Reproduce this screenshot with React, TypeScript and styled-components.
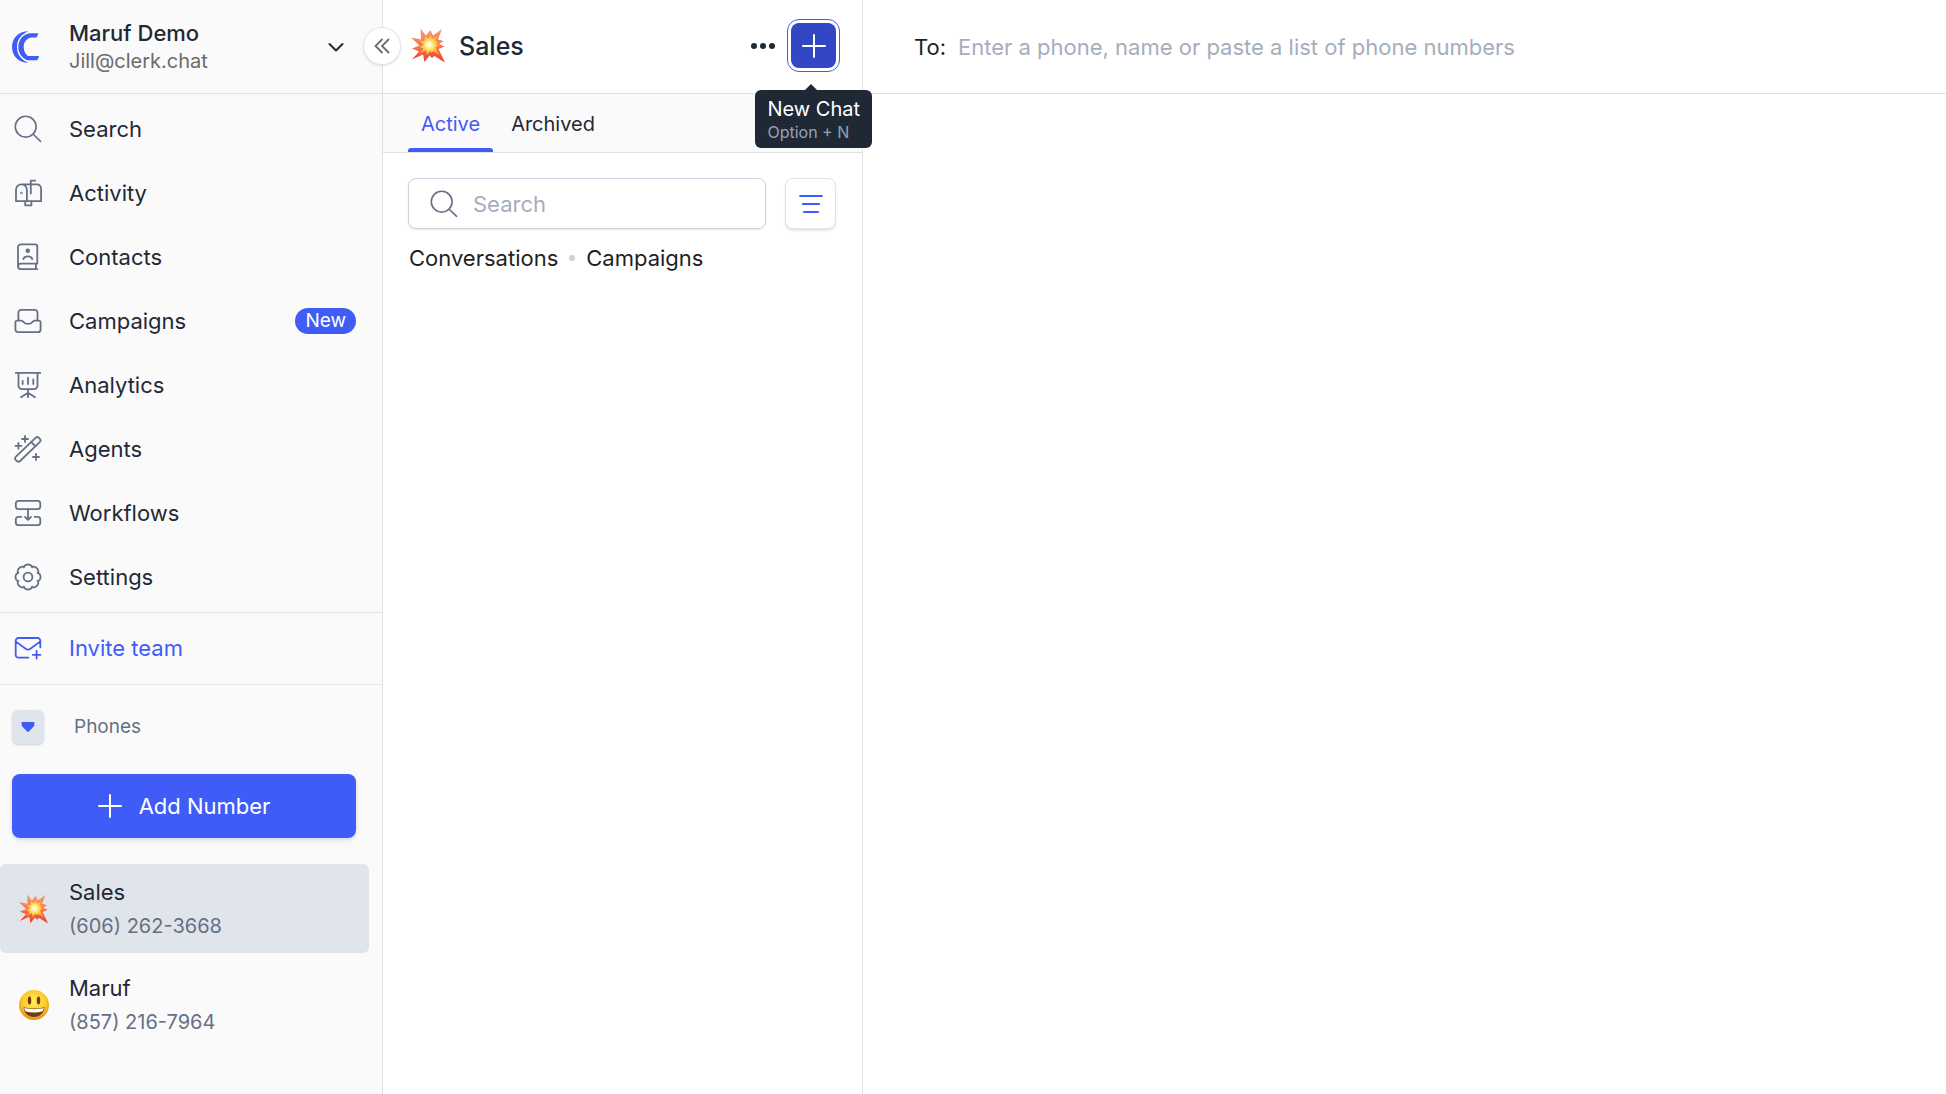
import React from "react";
import styled, { createGlobalStyle } from "styled-components";

const color = {
  ink: "#1f2937",
  muted: "#667085",
  faint: "#a6adbd",
  line: "#e0e1e4",
  panel: "#fafafa",
  blue: "#3f5cf7",
  blueDark: "#3347c5",
  selected: "#e0e4eb",
};

const GlobalStyle = createGlobalStyle`
  *, *::before, *::after { box-sizing: border-box; }
  body { margin: 0; font-family: Inter, "Liberation Sans", sans-serif; font-size: 22px; line-height: 28px; color: ${color.ink}; background: #fff; }
  button, input { font: inherit; color: inherit; }
  button { border: 0; padding: 0; background: none; cursor: pointer; }
  a { color: inherit; text-decoration: none; }
  svg { display: block; flex: none; }
  h1, ul { margin: 0; padding: 0; }
  ul { list-style: none; }
`;

const Page = styled.div`
  display: flex;
  min-height: 100vh;
`;

const Sidebar = styled.aside`
  flex: none;
  width: 383px;
  background: ${color.panel};
  border-right: 1px solid ${color.line};
`;

const AccountBar = styled.header`
  position: relative;
  display: flex;
  align-items: center;
  height: 94px;
  padding: 0 38px 0 12px;
  border-bottom: 1px solid ${color.line};
`;

const Account = styled.button`
  display: flex;
  flex: 1;
  align-items: center;
  gap: 29px;
  text-align: left;
`;

const AccountText = styled.span`
  display: flex;
  flex: 1;
  flex-direction: column;
`;

const AccountName = styled.span`
  font-weight: 500;
`;

const AccountMail = styled.span`
  font-size: 20px;
  color: #6b6b6b;
`;

const Collapse = styled.button`
  position: absolute;
  z-index: 2;
  right: -19px;
  top: 27px;
  display: grid;
  place-items: center;
  width: 38px;
  height: 38px;
  border: 1px solid #e4e6ee;
  border-radius: 50%;
  background: #fff;
  box-shadow: 0 1px 2px rgba(31, 41, 55, 0.15);
`;

const NavList = styled.ul`
  padding: 3px 0;
  border-bottom: 1px solid ${color.line};
`;

const NavLink = styled.a<{ $accent?: boolean }>`
  display: flex;
  align-items: center;
  gap: 27px;
  height: 64px;
  padding: 0 26px 0 14px;
  color: ${(p) => (p.$accent ? color.blue : color.ink)};

  svg {
    color: ${(p) => (p.$accent ? color.blue : color.muted)};
  }
`;

const NavLabel = styled.span`
  flex: 1;
`;

const Invite = styled.div`
  padding: 3px 0 4px;
  border-bottom: 1px solid #e6e8ee;
`;

const Badge = styled.span`
  padding: 0 10px;
  border-radius: 13px;
  background: ${color.blue};
  color: #fff;
  font-size: 19px;
  line-height: 26px;
`;

const PhonesHead = styled.div`
  display: flex;
  align-items: center;
  gap: 30px;
  padding: 25px 12px 30px;
  font-size: 19px;
  color: ${color.muted};
`;

const Toggle = styled.button`
  display: grid;
  place-items: center;
  width: 32px;
  height: 34px;
  border-radius: 6px;
  background: ${color.selected};
  box-shadow: 0 1px 2px rgba(31, 41, 55, 0.2);
`;

const AddArea = styled.div`
  padding: 0 26px 26px 12px;
`;

const AddNumber = styled.button`
  display: flex;
  align-items: center;
  justify-content: center;
  gap: 17px;
  width: 100%;
  height: 64px;
  border-radius: 8px;
  background: ${color.blue};
  color: #fff;
  box-shadow: 0 2px 4px rgba(31, 41, 55, 0.16);
`;

const PhoneList = styled.ul`
  display: flex;
  flex-direction: column;
  gap: 7px;
  padding-right: 13px;
`;

const PhoneRow = styled.a<{ $selected?: boolean }>`
  display: flex;
  align-items: center;
  gap: 19px;
  height: 89px;
  padding-left: 18px;
  border-radius: 6px;
  background: ${(p) => (p.$selected ? color.selected : "transparent")};
`;

const PhoneIcon = styled.span`
  display: grid;
  place-items: center;
  width: 32px;
`;

const PhoneText = styled.span`
  display: flex;
  flex-direction: column;
  gap: 6px;
  padding-top: 1px;
`;

const PhoneNumber = styled.span`
  font-size: 20px;
  color: ${color.muted};
`;

const Inbox = styled.section`
  flex: none;
  width: 480px;
  border-right: 1px solid ${color.line};
`;

const InboxBar = styled.header`
  display: flex;
  align-items: center;
  height: 94px;
  padding: 0 26px 2px 28px;
  border-bottom: 1px solid ${color.line};
`;

const InboxTitle = styled.h1`
  flex: 1;
  padding-left: 13px;
  font-size: 25px;
  font-weight: 500;
`;

const NewChatWrap = styled.div`
  position: relative;
  margin-left: 16px;
`;

const NewChat = styled.button`
  display: grid;
  place-items: center;
  width: 45px;
  height: 45px;
  border-radius: 8px;
  background: ${color.blueDark};
  color: #fff;
  outline: 1px solid ${color.blue};
  outline-offset: 3px;
`;

const Tooltip = styled.div`
  position: absolute;
  z-index: 3;
  top: 67px;
  right: -36px;
  padding: 6px 12px;
  border-radius: 6px;
  background: #1f2935;
  color: #fff;
  font-size: 20px;
  line-height: 26px;
  white-space: nowrap;

  &::before {
    content: "";
    position: absolute;
    top: -6px;
    left: 50%;
    margin-left: -9px;
    border: 6px solid transparent;
    border-top: 0;
    border-bottom-color: #1f2935;
  }
`;

const Shortcut = styled.div`
  font-size: 16px;
  line-height: 20px;
  color: #98a0ae;
`;

const Tabs = styled.nav`
  display: flex;
  gap: 5px;
  height: 59px;
  padding-left: 25px;
  background: ${color.panel};
  border-bottom: 1px solid ${color.line};
`;

const Tab = styled.button<{ $active?: boolean }>`
  position: relative;
  padding: 1px 13px 0;
  font-size: 20px;
  color: ${(p) => (p.$active ? color.blue : color.ink)};

  &::after {
    content: "";
    position: absolute;
    left: 0;
    right: 0;
    bottom: 0;
    height: 4px;
    border-radius: 3px 3px 0 0;
    background: ${(p) => (p.$active ? color.blue : "transparent")};
  }
`;

const Filters = styled.div`
  display: flex;
  gap: 19px;
  padding: 25px 26px 0 25px;
`;

const SearchBox = styled.label`
  display: flex;
  flex: 1;
  align-items: center;
  gap: 15px;
  min-width: 0;
  height: 51px;
  padding: 0 21px;
  border: 1px solid #ccd2e0;
  border-radius: 8px;
  color: ${color.muted};
  box-shadow: 0 1px 2px rgba(31, 41, 55, 0.1);
`;

const TextField = styled.input`
  flex: 1;
  min-width: 0;
  padding: 0;
  border: 0;
  outline: 0;
  background: transparent;
  color: ${color.ink};

  &::placeholder {
    color: ${color.faint};
    opacity: 1;
  }
`;

const FilterButton = styled.button`
  display: grid;
  place-items: center;
  width: 51px;
  height: 51px;
  border: 1px solid #e0e3ec;
  border-radius: 8px;
  background: #fff;
  color: ${color.blue};
  box-shadow: 0 2px 2px rgba(31, 41, 55, 0.12);
`;

const Kinds = styled.div`
  display: flex;
  align-items: center;
  gap: 11px;
  padding: 15px 26px;
  color: #1f1f1f;
`;

const Dot = styled.span`
  width: 6px;
  height: 6px;
  border-radius: 50%;
  background: #ccd2e0;
`;

const Chat = styled.main`
  flex: 1;
  min-width: 0;
`;

const Recipients = styled.label`
  display: flex;
  align-items: center;
  gap: 12px;
  height: 94px;
  padding: 0 51px;
  border-bottom: 1px solid ${color.line};
  color: #1f1f1f;
`;

type IconProps = { children: React.ReactNode; width?: number; size?: number };

const Icon = ({ children, width = 1.8, size = 28 }: IconProps) => (
  <svg
    width={size}
    height={size}
    viewBox={`0 0 ${size} ${size}`}
    fill="none"
    stroke="currentColor"
    strokeWidth={width}
    strokeLinecap="round"
    strokeLinejoin="round"
    aria-hidden="true"
  >
    {children}
  </svg>
);

const SearchIcon = () => (
  <Icon width={1.6}>
    <circle cx="11.7" cy="11.7" r="10.4" />
    <path d="M19.2 19.2 26.6 26.4" />
  </Icon>
);

const MailboxIcon = () => (
  <Icon>
    <path d="M2 22.2V10.8a5.4 5.4 0 0 1 10.9 0v11.4zM7.4 5.4h15.5a4.2 4.2 0 0 1 4.2 4.2v12.6H12.9" />
    <path d="M16.8 14.5V1.6h4.4M11.2 22.4v3.9h6.2v-3.9" />
    <circle cx="7.4" cy="14" r=".4" />
  </Icon>
);

const ContactsIcon = () => (
  <Icon>
    <path d="M4 23.4V4.2a2.9 2.9 0 0 1 2.9-2.9h14.2a2.2 2.2 0 0 1 2.2 2.2v17.1H6.8A2.8 2.8 0 0 0 4 23.4 2.8 2.8 0 0 0 6.8 26.1h16.6M21.9 20.6v5.5" />
    <circle cx="13.8" cy="7.8" r="1.4" fill="currentColor" />
    <path d="M9.3 16.1c1.2-3.6 7.8-3.6 9 0" />
  </Icon>
);

const TrayIcon = () => (
  <Icon>
    <path d="M4.4 13.3V5.6A2.7 2.7 0 0 1 7.1 2.9h13.7a2.7 2.7 0 0 1 2.7 2.7v7.7" />
    <path d="M3 13.6h4.2c1.4 0 1.8.7 2.5 1.7 1.5 2.2 7 2.2 8.5 0 .7-1 1.1-1.7 2.5-1.7h4.1a1.7 1.7 0 0 1 1.8 1.7v7.1a2.7 2.7 0 0 1-2.7 2.7H4.1a2.7 2.7 0 0 1-2.7-2.7v-7.1A1.7 1.7 0 0 1 3 13.6z" />
  </Icon>
);

const AnalyticsIcon = () => (
  <Icon>
    <path d="M1.8 1.9h24.5M4.5 2v12.8a3.3 3.3 0 0 0 3.3 3.3h12.4a3.3 3.3 0 0 0 3.3-3.3V2M8.7 10v3M14 6.7V13M19.3 8.5V13M14 18.2v8M7 26.2l7-4.5 7 4.5" />
  </Icon>
);

const WandIcon = () => (
  <Icon>
    <rect x="-16" y="-3" width="32" height="6" rx="2.4" transform="translate(13.8 14.4) rotate(-44)" />
    <path d="M17.3 7.1l3.9 3.9M11 1v6M8 4h6M4.4 7.8v6M1.4 10.8h6M22 19v6M19 22h6" />
  </Icon>
);

const WorkflowIcon = () => (
  <Icon>
    <rect x="1.8" y="1.9" width="24.5" height="8.3" rx="2.6" />
    <path d="M7.4 17.9h-3a2.6 2.6 0 0 0-2.6 2.6v3.1a2.6 2.6 0 0 0 2.6 2.6h19.3a2.6 2.6 0 0 0 2.6-2.6v-3.1a2.6 2.6 0 0 0-2.6-2.6h-3M14 10.3v10.4M11 17.9l3 3 3-3" />
  </Icon>
);

const gearPath =
  Array.from({ length: 96 }, (_, i) => {
    const a = (i / 96) * Math.PI * 2;
    const r = 10.4 + 2.1 * Math.sqrt(Math.abs(Math.cos(4 * a)));
    return `${i ? "L" : "M"}${(14 + r * Math.sin(a)).toFixed(2)} ${(14 - r * Math.cos(a)).toFixed(2)}`;
  }).join("") + "z";

const GearIcon = () => (
  <Icon>
    <path d={gearPath} />
    <circle cx="14" cy="14" r="4.4" />
  </Icon>
);

const InviteIcon = () => (
  <Icon>
    <path d="M14.4 23.6H4.4a2.7 2.7 0 0 1-2.7-2.7V6.7A2.7 2.7 0 0 1 4.4 4h19.2a2.7 2.7 0 0 1 2.7 2.7v6.6M2 7.6l9.6 7.1a4 4 0 0 0 4.8 0L26 7.6M22.6 17v7.6M18.8 20.8h7.6" />
  </Icon>
);

const PlusIcon = () => (
  <Icon size={24} width={2}>
    <path d="M12 1v22M1 12h22" />
  </Icon>
);

const Logo = () => (
  <svg width="28" height="32" viewBox="0 0 28 32" aria-hidden="true">
    <path fill={color.blue} d="M16.500.2C6 .3 0 7.500 0 16s6 15.700 16.500 15.800C8.500 28.500 5 23 5 16S8.500 3.500 16.500.2z" />
    <path fill={color.blue} d="M26.500 2.300 24.600 6.600h-4.400c-6 .4-8.500 5-8.500 9.400 0 3.800 1.600 7 4.200 9H27.200l-1.900 4.300H15.500C9.500 27.200 6.300 21.500 6.300 16 6.300 8.500 11.500 2.500 19 2.300z" />
  </svg>
);

const burst =
  "0,9.500 10,11.500 9.500,.5 15,7.500 19.500,2 22,7.500 31,1 27,11.500 32.500,13 28,16 33.500,18.500 27.500,21 34,34.500 23.500,28 21,30 18.500,27.500 13.500,34 12,26.500 1,31.500 8,23.500 1,20.500 8.500,17.500";

const Collision = ({ size }: { size: number }) => (
  <svg width={size} height={size} viewBox="0 0 35 35" role="img" aria-label="Collision">
    <defs>
      <linearGradient id={`flame${size}`} x1="0" y1="0" x2="0" y2="1">
        <stop offset="0" stopColor="#fa9a78" />
        <stop offset=".55" stopColor="#f5734a" />
        <stop offset="1" stopColor="#e93b35" />
      </linearGradient>
      <radialGradient id={`core${size}`}>
        <stop offset="0" stopColor="#fff" />
        <stop offset=".25" stopColor="#fff6a8" />
        <stop offset=".6" stopColor="#ffd04a" />
        <stop offset="1" stopColor="#ff9a3c" />
      </radialGradient>
    </defs>
    <polygon points={burst} fill={`url(#flame${size})`} />
    <polygon points={burst} fill={`url(#core${size})`} transform="translate(7.600 6) scale(.62)" />
  </svg>
);

const Grin = () => (
  <svg width="32" height="32" viewBox="0 0 32 32" role="img" aria-label="Grinning face">
    <defs>
      <radialGradient id="face" cx=".5" cy=".4" r=".6">
        <stop offset="0" stopColor="#ffec55" />
        <stop offset=".65" stopColor="#fccb2d" />
        <stop offset="1" stopColor="#e88b12" />
      </radialGradient>
    </defs>
    <circle cx="16" cy="16" r="15" fill="url(#face)" />
    <ellipse cx="11.500" cy="11.500" rx="1.700" ry="4" fill="#6a3a0c" />
    <ellipse cx="20.500" cy="11.500" rx="1.700" ry="4" fill="#6a3a0c" />
    <path d="M5.500 18.200c6 1.700 15 1.700 21 0C26 24 22 28 16 28S6 24 5.500 18.200z" fill="#6f3f10" />
    <path d="M6.300 19c6 1.500 13.500 1.500 19.400 0-.3 1.800-.8 3-1.500 3.600-5 1.200-11.400 1.200-16.400 0C7.100 22 6.500 20.800 6.300 19z" fill="#fff" />
  </svg>
);

const navItems = [
  { label: "Search", icon: <SearchIcon /> },
  { label: "Activity", icon: <MailboxIcon /> },
  { label: "Contacts", icon: <ContactsIcon /> },
  { label: "Campaigns", icon: <TrayIcon />, badge: "New" },
  { label: "Analytics", icon: <AnalyticsIcon /> },
  { label: "Agents", icon: <WandIcon /> },
  { label: "Workflows", icon: <WorkflowIcon /> },
  { label: "Settings", icon: <GearIcon /> },
];

const phones = [
  { name: "Sales", number: "(606) 262-3668", icon: <Collision size={30} />, selected: true },
  { name: "Maruf", number: "(857) 216-7964", icon: <Grin />, selected: false },
];

export default function App() {
  return (
    <Page>
      <GlobalStyle />
      <Sidebar>
        <AccountBar>
          <Account>
            <Logo />
            <AccountText>
              <AccountName>Maruf Demo</AccountName>
              <AccountMail>Jill@clerk.chat</AccountMail>
            </AccountText>
            <Icon size={16} width={2}>
              <path d="M1.500 5 8 11.500 14.500 5" />
            </Icon>
          </Account>
          <Collapse aria-label="Collapse sidebar">
            <svg width="16" height="16" viewBox="0 0 16 16" fill="none" stroke="#6b6b6b" strokeWidth="1.8">
              <path d="M8.500 1 1.500 8l7 7M15 1 8 8l7 7" />
            </svg>
          </Collapse>
        </AccountBar>
        <nav>
          <NavList>
            {navItems.map((item) => (
              <li key={item.label}>
                <NavLink href="#">
                  {item.icon}
                  <NavLabel>{item.label}</NavLabel>
                  {item.badge && <Badge>{item.badge}</Badge>}
                </NavLink>
              </li>
            ))}
          </NavList>
          <Invite>
            <NavLink href="#" $accent>
              <InviteIcon />
              <NavLabel>Invite team</NavLabel>
            </NavLink>
          </Invite>
        </nav>
        <PhonesHead>
          <Toggle aria-label="Toggle phones">
            <svg width="14" height="12" viewBox="0 0 14 12" fill={color.blue}>
              <path d="M1.500 1h11c1 0 1.300 1 .8 1.800v2L8.200 10.300c-.7.700-1.700.7-2.400 0L.7 4.800v-2C.2 2 .5 1 1.500 1z" />
            </svg>
          </Toggle>
          <span>Phones</span>
        </PhonesHead>
        <AddArea>
          <AddNumber>
            <PlusIcon />
            <span>Add Number</span>
          </AddNumber>
        </AddArea>
        <PhoneList>
          {phones.map((phone) => (
            <li key={phone.name}>
              <PhoneRow href="#" $selected={phone.selected}>
                <PhoneIcon>{phone.icon}</PhoneIcon>
                <PhoneText>
                  <span>{phone.name}</span>
                  <PhoneNumber>{phone.number}</PhoneNumber>
                </PhoneText>
              </PhoneRow>
            </li>
          ))}
        </PhoneList>
      </Sidebar>

      <Inbox>
        <InboxBar>
          <Collision size={35} />
          <InboxTitle>Sales</InboxTitle>
          <button aria-label="More options">
            <svg width="24" height="8" viewBox="0 0 24 8" fill={color.ink}>
              <circle cx="3" cy="4" r="3" />
              <circle cx="12" cy="4" r="3" />
              <circle cx="21" cy="4" r="3" />
            </svg>
          </button>
          <NewChatWrap>
            <NewChat aria-label="New Chat">
              <PlusIcon />
            </NewChat>
            <Tooltip role="tooltip">
              New Chat
              <Shortcut>Option + N</Shortcut>
            </Tooltip>
          </NewChatWrap>
        </InboxBar>
        <Tabs>
          <Tab $active>Active</Tab>
          <Tab>Archived</Tab>
        </Tabs>
        <Filters>
          <SearchBox>
            <SearchIcon />
            <TextField type="text" placeholder="Search" aria-label="Search conversations" />
          </SearchBox>
          <FilterButton aria-label="Filter">
            <Icon size={24} width={2.2}>
              <path d="M1.200 4h21.600M4 12h16M5 20h14" />
            </Icon>
          </FilterButton>
        </Filters>
        <Kinds>
          <span>Conversations</span>
          <Dot />
          <span>Campaigns</span>
        </Kinds>
      </Inbox>

      <Chat>
        <Recipients>
          <span>To:</span>
          <TextField type="text" placeholder="Enter a phone, name or paste a list of phone numbers" />
        </Recipients>
      </Chat>
    </Page>
  );
}
